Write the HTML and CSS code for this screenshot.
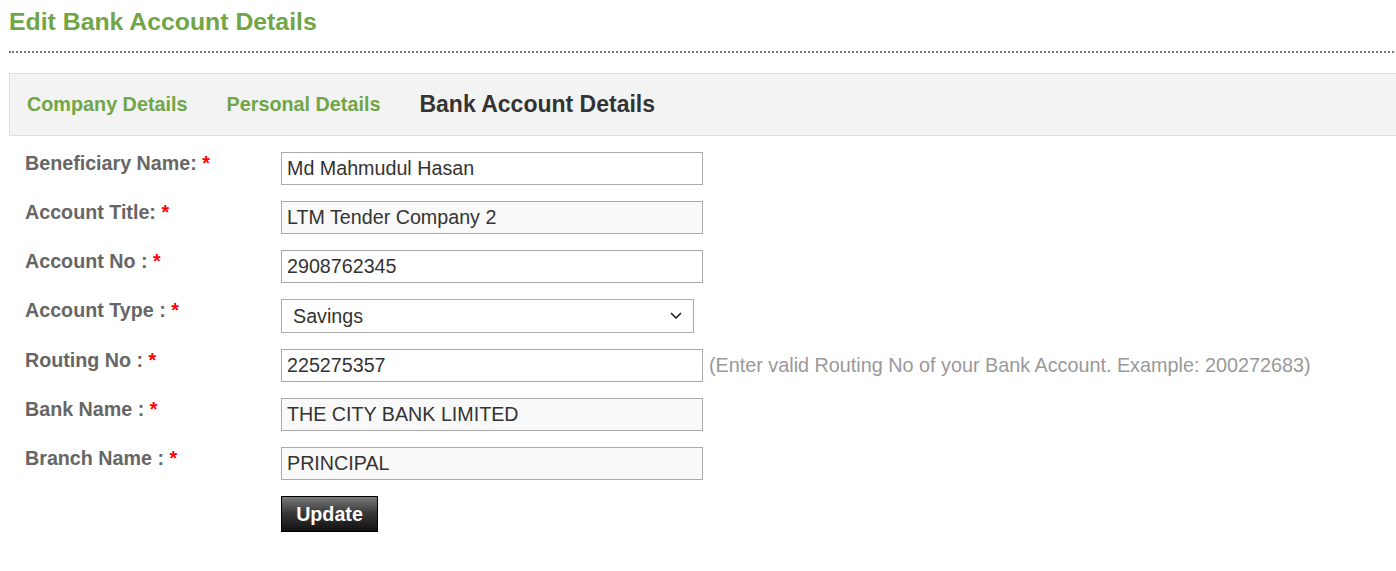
FILE: index.html
```html
<!DOCTYPE html>
<html>
<head>
<meta charset="utf-8">
<link rel="stylesheet" href="styles.css">
</head>
<body>
<div class="page">
  <h1 class="title">Edit Bank Account Details</h1>
  <div class="tabs">
    <a class="tab">Company Details</a>
    <a class="tab">Personal Details</a>
    <span class="tab active">Bank Account Details</span>
  </div>
  <form class="form">
    <label class="label">Beneficiary Name: <span class="req">*</span></label>
    <div class="field"><input class="input" type="text" value="Md Mahmudul Hasan"></div>

    <label class="label">Account Title: <span class="req">*</span></label>
    <div class="field"><input class="input readonly" type="text" value="LTM Tender Company 2" readonly></div>

    <label class="label">Account No : <span class="req">*</span></label>
    <div class="field"><input class="input" type="text" value="2908762345"></div>

    <label class="label">Account Type : <span class="req">*</span></label>
    <div class="field">
      <div class="select-wrap">
        <select class="select">
          <option>Savings</option>
          <option>Current</option>
        </select>
        <svg class="chevron" width="12" height="7" viewBox="0 0 12 7"><path d="M1 1 L6 6 L11 1" fill="none" stroke="#222" stroke-width="1.6"/></svg>
      </div>
    </div>

    <label class="label">Routing No : <span class="req">*</span></label>
    <div class="field"><input class="input" type="text" value="225275357"><span class="hint">(Enter valid Routing No of your Bank Account. Example: 200272683)</span></div>

    <label class="label">Bank Name : <span class="req">*</span></label>
    <div class="field"><input class="input readonly" type="text" value="THE CITY BANK LIMITED" readonly></div>

    <label class="label">Branch Name : <span class="req">*</span></label>
    <div class="field"><input class="input readonly" type="text" value="PRINCIPAL" readonly></div>

    <span class="label"></span>
    <div class="field"><button class="btn" type="button">Update</button></div>
  </form>
</div>
</body>
</html>
```

FILE: styles.css
```css
html, body {
  margin: 0;
  padding: 0;
  overflow: hidden;
  background: #fff;
}

body {
  font-family: "Liberation Sans", Arial, sans-serif;
  color: #333;
}

.page {
  width: 1440px;
  padding: 8px 0 0 9px;
}

.title {
  margin: 0;
  font-size: 24.8px;
  font-weight: bold;
  color: #70a548;
  padding: 0 0 15px 0;
  border-bottom: 2px dotted #777;
  line-height: 28px;
}

.tabs {
  margin-top: 20px;
  height: 61px;
  background: #f3f3f3;
  border: 1px solid #dddddd;
  display: flex;
  align-items: center;
  gap: 39px;
  padding-left: 17px;
}

.tab {
  font-size: 19.8px;
  font-weight: bold;
  color: #70a548;
  text-decoration: none;
}

.tab.active {
  font-size: 23px;
  color: #333;
}

.form {
  margin-top: 16px;
  padding-left: 16px;
  display: grid;
  grid-template-columns: 256px 1fr;
  row-gap: 16px;
}

.label {
  font-size: 19.7px;
  font-weight: bold;
  color: #666;
  line-height: 22px;
}

.req {
  color: #ff0000;
}

.field {
  display: flex;
  align-items: center;
}

.input {
  box-sizing: border-box;
  width: 422px;
  height: 33px;
  border: 1px solid #aaaaaa;
  padding: 0 5px;
  font-family: "Liberation Sans", Arial, sans-serif;
  font-size: 19.7px;
  color: #333;
  background: #fff;
  margin: 0;
  outline: none;
}

.input.readonly {
  background: #f9f9f9;
}

.select-wrap {
  position: relative;
  display: flex;
}

.select {
  box-sizing: border-box;
  width: 413px;
  height: 34px;
  border: 1px solid #aaaaaa;
  border-radius: 0;
  padding: 0 11px;
  font-family: "Liberation Sans", Arial, sans-serif;
  font-size: 19.7px;
  color: #333;
  background: #fff;
  margin: 0;
  appearance: none;
  -webkit-appearance: none;
  outline: none;
}

.chevron {
  position: absolute;
  right: 12px;
  top: 13px;
  pointer-events: none;
}

.hint {
  margin-left: 6px;
  font-size: 19.8px;
  color: #999;
}

.btn {
  box-sizing: border-box;
  height: 36px;
  width: 97px;
  border: 1px solid #000;
  border-radius: 0;
  background: linear-gradient(to bottom, #7a7a7a 0%, #3a3a3a 45%, #111 100%);
  color: #fff;
  font-family: "Liberation Sans", Arial, sans-serif;
  font-size: 19.7px;
  font-weight: bold;
  padding: 0;
  margin: 0;
  cursor: pointer;
}
```
